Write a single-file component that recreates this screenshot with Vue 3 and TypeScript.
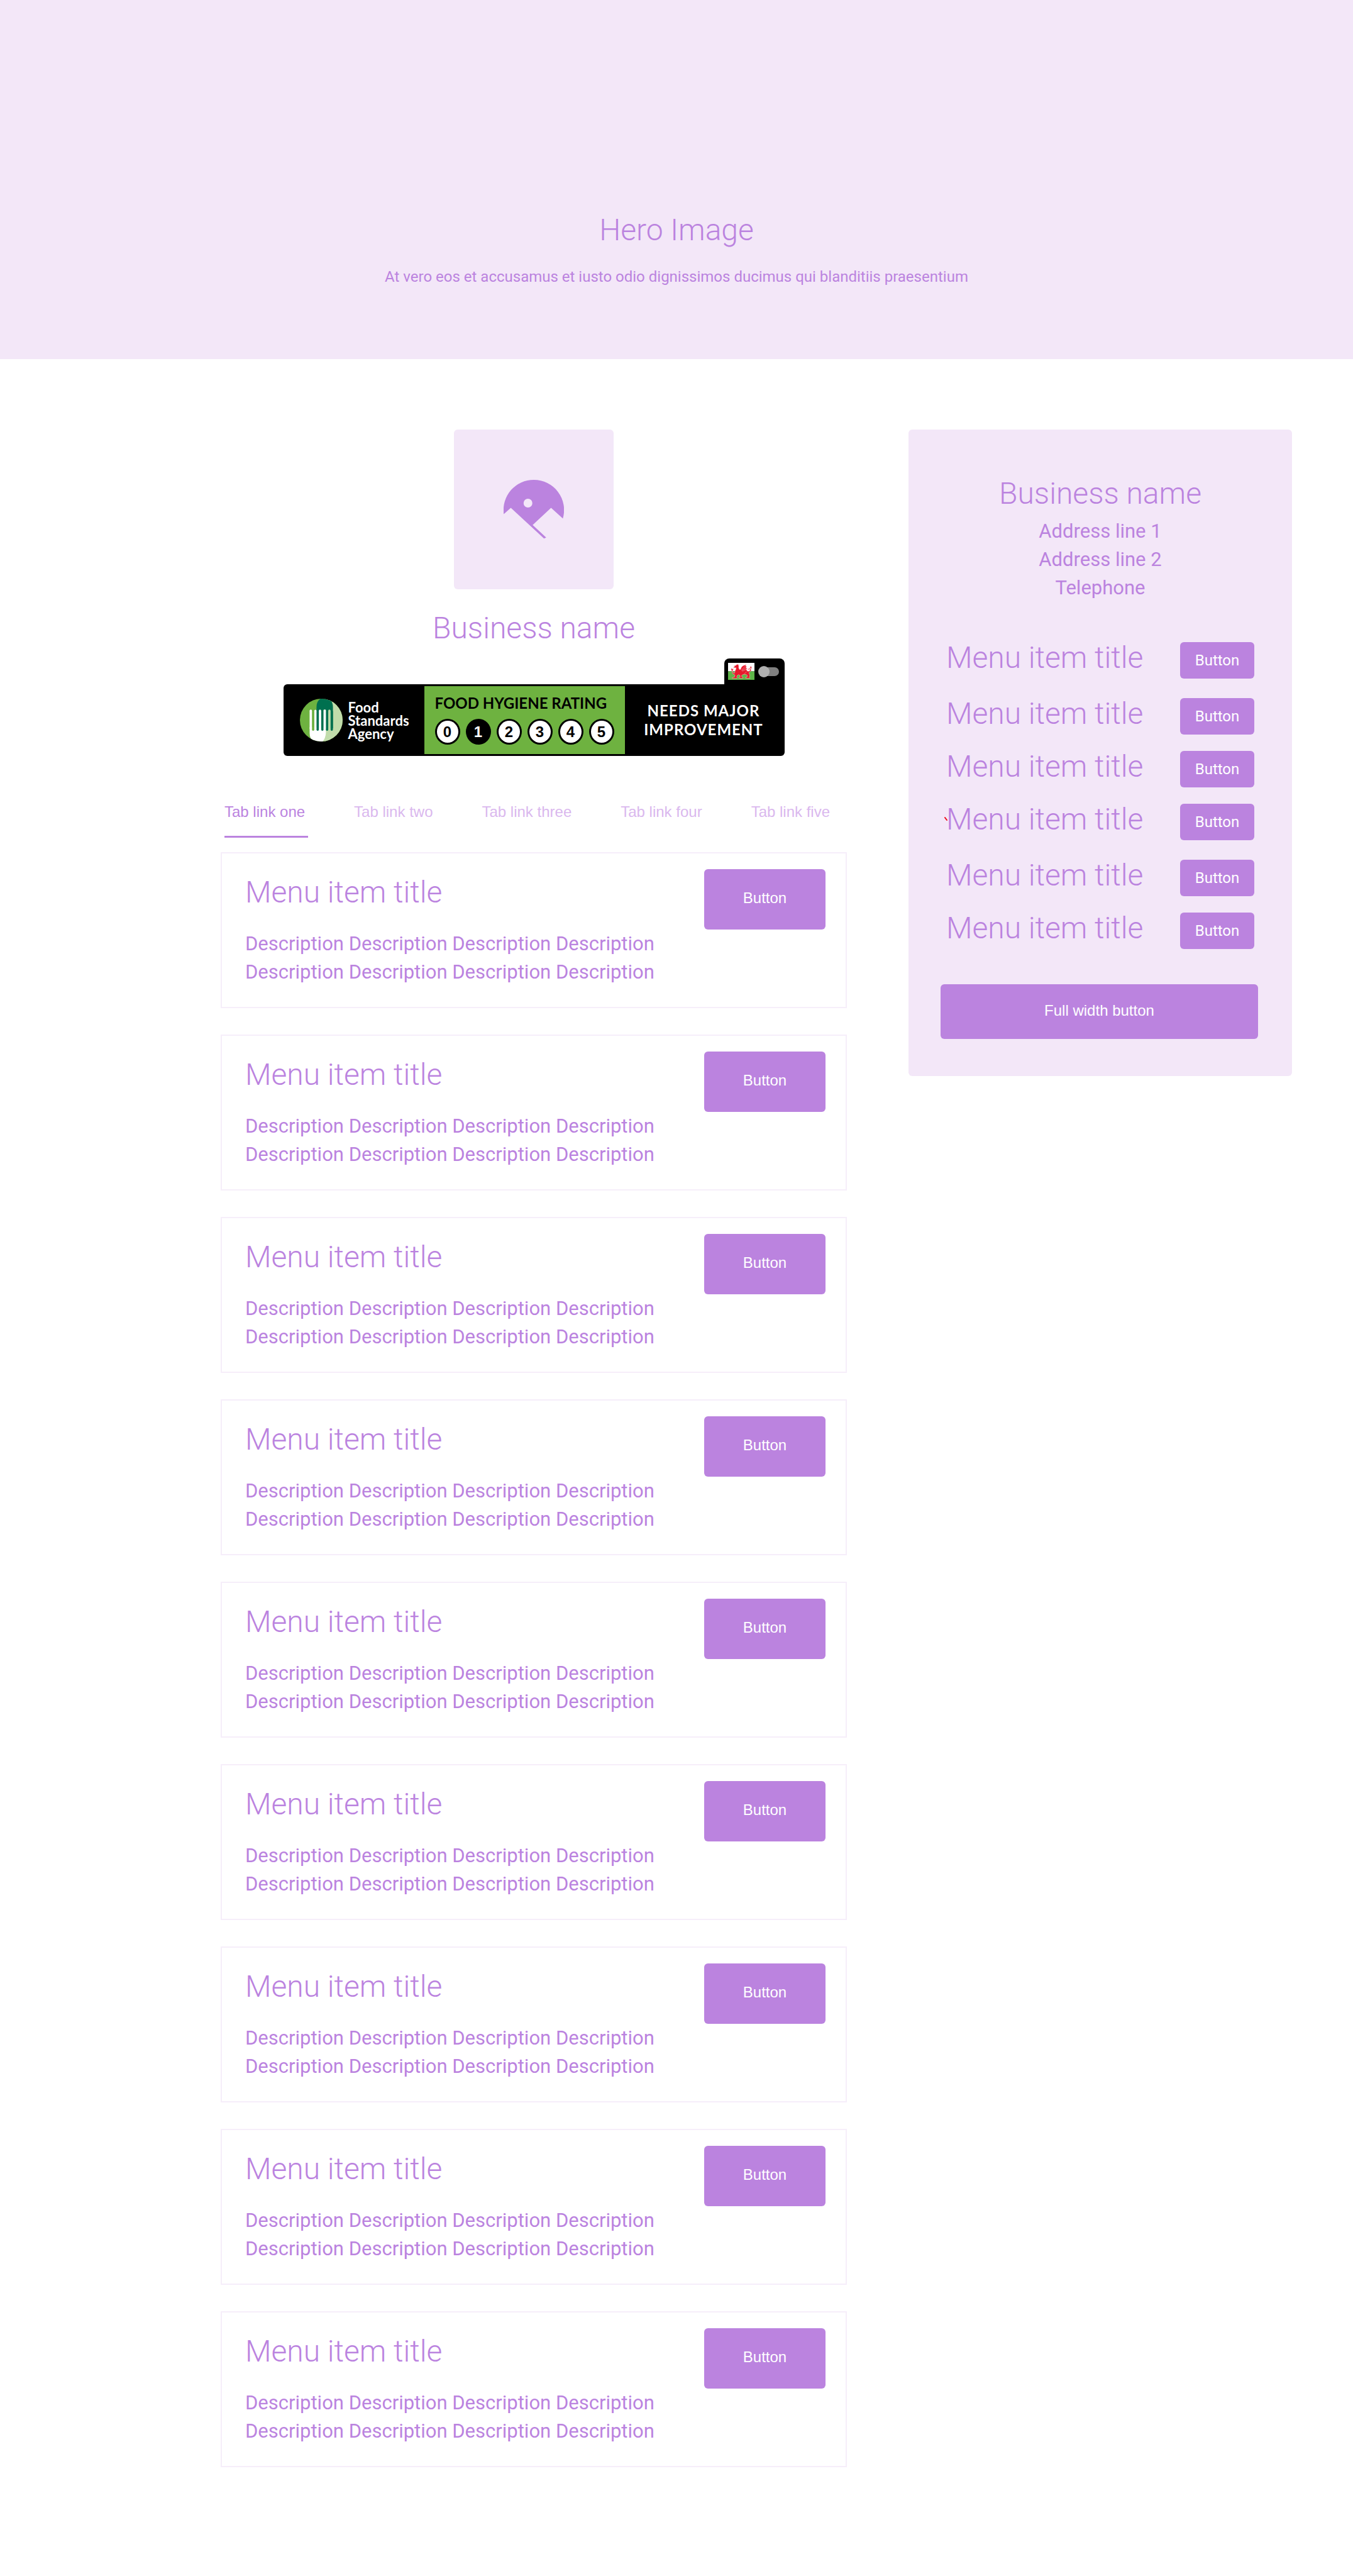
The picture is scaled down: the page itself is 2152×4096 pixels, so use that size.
<script setup lang="ts">
import { ref } from 'vue'

interface MenuItem {
  title: string
  lines: string[]
}

const tabs: string[] = ['Tab link one', 'Tab link two', 'Tab link three', 'Tab link four', 'Tab link five']
const activeTab = ref(0)

const ratings: number[] = [0, 1, 2, 3, 4, 5]
const rating = 1
const welsh = ref(false)

const line = 'Description Description Description Description'
const items: MenuItem[] = Array.from({ length: 9 }, () => ({
  title: 'Menu item title',
  lines: [line, line],
}))

const address: string[] = ['Address line 1', 'Address line 2', 'Telephone']

// Basket rows, grouped as they appear in the side panel.
const groups: { title: string; marked?: boolean }[][] = [
  [{ title: 'Menu item title' }],
  [{ title: 'Menu item title' }, { title: 'Menu item title' }, { title: 'Menu item title', marked: true }],
  [{ title: 'Menu item title' }, { title: 'Menu item title' }],
]
</script>

<template>
  <div class="page">
    <header class="hero">
      <h1 class="heading">Hero Image</h1>
      <p class="hero-text">At vero eos et accusamus et iusto odio dignissimos ducimus qui blanditiis praesentium</p>
    </header>

    <div class="content">
      <main class="main">
        <div class="logo">
          <svg class="logo-icon" viewBox="522 420 384 373" aria-hidden="true">
            <path
              fill="#bb83df"
              fill-rule="evenodd"
              d="M523 638 A192 192 0 0 1 714 420 A192 192 0 0 1 899 666 L824 598 L707 707 L793 787 L779 793 L568 598 Z M705 568 A28 28 0 1 0 649 568 A28 28 0 1 0 705 568 Z"
            />
          </svg>
        </div>
        <h2 class="heading business">Business name</h2>

        <section class="hygiene" aria-label="Food hygiene rating">
          <div class="language">
            <svg class="flag" viewBox="90 66 168 108" aria-hidden="true">
              <rect x="90" y="66" width="168" height="54" fill="#fff" />
              <rect x="90" y="120" width="168" height="54" fill="#5fb548" />
              <g fill="#e8192c" stroke="#f6c9cc" stroke-width="2" stroke-linejoin="round">
                <path
                  d="M127 86 L138 83 L147 76 L158 77 L154 81 L159 84 L157 92 L160 104 L166 110 L171 104 L176 92 L186 84 L206 77 L202 84 L208 92 L203 97 L213 104 L205 107 L210 115 L218 121 L228 116 L231 109 L226 106 L218 110 L216 106 L224 102 L234 104 L237 112 L233 120 L225 125 L224 134 L229 143 L226 155 L230 164 L203 164 L200 159 L210 157 L213 147 L205 140 L192 139 L182 142 L176 147 L178 155 L186 159 L184 164 L160 164 L158 159 L167 155 L165 145 L157 141 L148 147 L145 155 L149 160 L146 165 L117 165 L116 160 L126 157 L130 157 L134 146 L130 140 L120 136 L116 126 L114 116 L109 109 L112 99 L117 107 L122 101 L123 109 L118 117 L122 128 L131 132 L134 119 L140 106 L141 97 L129 98 L124 94 L133 91 Z"
                />
                <path d="M235 85 L242 102 L236 99 L235 106 L232 100 L227 103 Z" />
              </g>
              <g fill="none" stroke="#f6c9cc" stroke-width="2">
                <path d="M174 114 L202 84 M178 116 L207 94 M180 119 L210 105 M190 140 L208 122" />
              </g>
            </svg>
            <label class="toggle">
              <input v-model="welsh" type="checkbox" aria-label="Welsh" />
            </label>
          </div>

          <div class="badge">
            <div class="agency">
              <svg class="agency-logo" viewBox="56 51 273 273" aria-hidden="true">
                <defs>
                  <clipPath id="disc"><circle cx="192.5" cy="187.5" r="136.5" /></clipPath>
                </defs>
                <g clip-path="url(#disc)">
                  <rect x="56" y="51" width="273" height="273" fill="#6eb240" />
                  <path fill="#c1dcab" d="M215 51 H329 V324 H190 V240 Z" />
                  <path fill="#fff" d="M118 235 H222 V268 Q220 305 200 326 H150 Q118 315 118 270 Z" />
                  <path fill="#00704f" d="M162 240 V105 Q162 65 188 51 H245 Q267 72 267 105 V240 H222 V121 H207 V240 Z" />
                  <path fill="#6eb240" d="M133 130 H148 V248 A7 7 0 0 1 133 248 Z" />
                  <g fill="#00704f">
                    <path d="M162 130 H177 V248 A7 7 0 0 1 162 248 Z" />
                    <path d="M192 130 H207 V248 A7 7 0 0 1 192 248 Z" />
                    <path d="M222 130 H237 V248 A7 7 0 0 1 222 248 Z" />
                    <path d="M252 130 H267 V248 A7 7 0 0 1 252 248 Z" />
                  </g>
                  <g fill="#fff">
                    <path d="M118 242 V128 A7 7 0 0 1 133 128 V242 Z" />
                    <path d="M148 242 V128 A7 7 0 0 1 162 128 V242 Z" />
                    <path d="M177 242 V128 A7 7 0 0 1 192 128 V242 Z" />
                    <path d="M207 242 V128 A7 7 0 0 1 222 128 V242 Z" />
                  </g>
                  <path fill="#c1dcab" d="M237 242 V128 A7 7 0 0 1 252 128 V242 Z" />
                </g>
              </svg>
              <p class="agency-name">Food<br />Standards<br />Agency</p>
            </div>
            <div class="scale">
              <h3 class="scale-title">FOOD HYGIENE RATING</h3>
              <ol class="scale-list">
                <li v-for="n in ratings" :key="n" class="score" :class="{ current: n === rating }">{{ n }}</li>
              </ol>
            </div>
            <p class="verdict">NEEDS MAJOR<br />IMPROVEMENT</p>
          </div>
        </section>

        <nav class="tabs">
          <a
            v-for="(tab, i) in tabs"
            :key="tab"
            href="#"
            class="tab"
            :class="{ active: i === activeTab }"
            @click.prevent="activeTab = i"
            >{{ tab }}</a
          >
        </nav>

        <section class="cards">
          <article v-for="(item, i) in items" :key="i" class="card">
            <div class="card-text">
              <h3 class="heading">{{ item.title }}</h3>
              <p class="description">
                <template v-for="(text, l) in item.lines" :key="l"><br v-if="l" />{{ text }}</template>
              </p>
            </div>
            <button type="button" class="button card-button">Button</button>
          </article>
        </section>
      </main>

      <aside class="panel">
        <h2 class="heading">Business name</h2>
        <address class="address">
          <template v-for="(text, i) in address" :key="i"><br v-if="i" />{{ text }}</template>
        </address>

        <div class="order">
          <div class="groups">
            <ul v-for="(group, g) in groups" :key="g" class="group">
              <li v-for="(row, r) in group" :key="r" class="row">
                <svg v-if="row.marked" class="mark" viewBox="0 0 5 6" aria-hidden="true">
                  <path d="M1 1 L4 5" stroke="#f00f1e" stroke-width="2" stroke-linecap="round" />
                </svg>
                <span class="row-title">{{ row.title }}</span>
                <button type="button" class="button row-button">Button</button>
              </li>
            </ul>
          </div>

          <button type="button" class="button full-button">Full width button</button>
        </div>
      </aside>
    </div>
  </div>
</template>

<style>
body {
  margin: 0;
  background: #fff;
}
</style>

<style scoped>
.page {
  color: #bb83df;
  font-family: Roboto, sans-serif;
  font-size: 24px;
}

h1,
h2,
h3,
p,
ul,
ol {
  margin: 0;
  padding: 0;
}

ul,
ol {
  list-style: none;
}

.heading {
  font-size: 48px;
  font-weight: 300;
  line-height: 56px;
}

.hero {
  padding: 338px 32px 115px;
  background: #f3e7f8;
  text-align: center;
}

.hero-text {
  margin-top: 30px;
  line-height: 32px;
}

.content {
  display: grid;
  grid-template-columns: minmax(0, 1fr) 610px;
  align-items: start;
  gap: 98px;
  padding: 112px 97px 174px 351px;
}

.main {
  display: flex;
  flex-direction: column;
  align-items: center;
}

.logo {
  display: flex;
  align-items: center;
  justify-content: center;
  width: 254px;
  height: 254px;
  border-radius: 6px;
  background: #f3e7f8;
}

.logo-icon {
  width: 96px;
}

.business {
  margin-top: 34px;
}

.hygiene {
  display: flex;
  flex-direction: column;
  align-items: flex-end;
  margin-top: 20px;
  font-family: Lato, sans-serif;
}

.language {
  display: flex;
  align-items: center;
  box-sizing: border-box;
  gap: 6px;
  height: 41px;
  padding: 0 9px 0 6px;
  border-radius: 8px 8px 0 0;
  background: #000;
}

.flag {
  width: 42px;
  height: 27px;
}

.toggle {
  display: flex;
}

.toggle input {
  position: relative;
  width: 33px;
  height: 18px;
  margin: 0;
  appearance: none;
}

.toggle input::before {
  position: absolute;
  top: 2px;
  left: 2px;
  width: 31px;
  height: 14px;
  border-radius: 7px;
  background: #808080;
  content: '';
}

.toggle input::after {
  position: absolute;
  top: 0;
  left: 0;
  width: 18px;
  height: 18px;
  border-radius: 50%;
  background: #b0b0b0;
  content: '';
}

.toggle input:checked::after {
  right: 0;
  left: auto;
}

.badge {
  display: flex;
  box-sizing: border-box;
  width: 797px;
  padding: 3px;
  border-radius: 6px 0 6px 6px;
  background: #000;
  color: #fff;
}

.agency {
  display: flex;
  align-items: center;
  box-sizing: border-box;
  gap: 9px;
  width: 221px;
  padding-left: 23px;
}

.agency-logo {
  width: 68px;
  height: 68px;
}

.agency-name {
  font-size: 22px;
  font-weight: 700;
  line-height: 21px;
}

.scale {
  box-sizing: border-box;
  width: 319px;
  padding: 12px 16px 15px 17px;
  background: #6eb240;
  color: #000;
}

.scale-title {
  font-size: 24px;
  font-weight: 700;
  line-height: 30px;
  white-space: nowrap;
}

.scale-list {
  display: flex;
  gap: 9px;
  margin-top: 10px;
}

.score {
  display: flex;
  align-items: center;
  justify-content: center;
  box-sizing: border-box;
  width: 40px;
  height: 41px;
  border: 3px solid #000;
  border-radius: 50%;
  background: #fff;
  font: 700 24px 'Liberation Sans', sans-serif;
}

.score.current {
  background: #000;
  color: #fff;
}

.verdict {
  flex: 1;
  align-self: center;
  font-weight: 700;
  font-size: 24px;
  letter-spacing: 1px;
  line-height: 30px;
  text-align: center;
}

.tabs {
  display: flex;
  align-self: stretch;
  gap: 73px;
  margin-top: 73px;
  padding-left: 6px;
  font-family: 'Liberation Sans', sans-serif;
}

.tab {
  padding: 0 5px 22px 0;
  border-bottom: 3px solid transparent;
  color: #dab8ee;
  line-height: 32px;
  text-decoration: none;
  white-space: nowrap;
}

.tab.active {
  border-color: #bb83df;
  color: #bb83df;
}

.cards {
  display: flex;
  flex-direction: column;
  align-self: stretch;
  gap: 42px;
  margin-top: 23px;
}

.card {
  display: flex;
  align-items: flex-start;
  justify-content: space-between;
  padding: 25px 32px 33px 37px;
  border: 2px solid #f6eefa;
}

.card-text {
  padding-top: 9px;
}

.description {
  margin-top: 31px;
  font-size: 31px;
  line-height: 45px;
}

.button {
  padding: 0;
  border: 0;
  border-radius: 6px;
  background: #bb83df;
  color: #fff;
  font: 24px 'Liberation Sans', sans-serif;
  cursor: pointer;
}

.card-button {
  width: 193px;
  height: 96px;
  padding-bottom: 4px;
}

.panel {
  padding: 74px 51px 59px;
  border-radius: 6px;
  background: #f3e7f8;
  text-align: center;
}

.address {
  margin-top: 9px;
  font-size: 31px;
  font-style: normal;
  line-height: 45px;
}

.order {
  display: flex;
  flex-direction: column;
  gap: 56px;
  margin-top: 64px;
  padding-right: 3px;
}

.groups {
  display: flex;
  flex-direction: column;
  gap: 31px;
  padding: 0 6px 0 9px;
}

.group {
  display: flex;
  flex-direction: column;
  gap: 26px;
}

.row {
  position: relative;
  display: flex;
  align-items: flex-start;
  justify-content: space-between;
}

.row-title {
  font-size: 48px;
  font-weight: 300;
  line-height: 50px;
}

.mark {
  position: absolute;
  top: 21px;
  left: -3px;
  width: 5px;
  height: 6px;
}

.row-button {
  width: 118px;
  height: 58px;
  font-family: Roboto, sans-serif;
}

.full-button {
  height: 87px;
  padding-bottom: 4px;
}
</style>
